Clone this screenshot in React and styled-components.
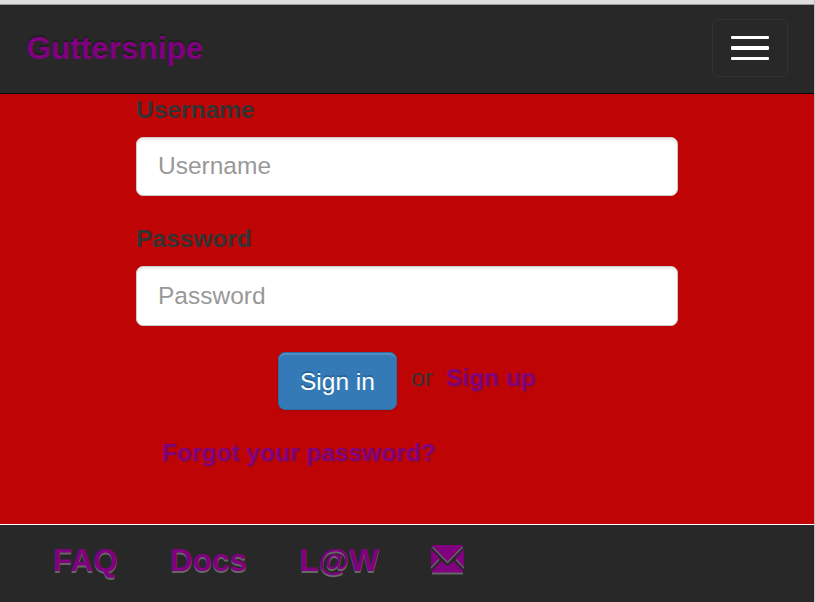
import React from "react";
import styled, { createGlobalStyle } from "styled-components";

const GlobalStyle = createGlobalStyle`
  * { box-sizing: border-box; }
  body {
    margin: 0;
    background: #be0404;
    overflow: hidden;
    font-family: "Liberation Sans", Arial, sans-serif;
    font-size: 24.5px;
    color: #333;
  }
`;

const Page = styled.div`
  display: flex;
  flex-direction: column;
  width: 815px;
  height: 602px;
  border-right: 1px solid #c4bcbc;
  background: #be0404;
`;

const TopEdge = styled.div`
  height: 5px;
  flex: none;
  background: #dedede;
  border-bottom: 1px solid #999;
`;

const Navbar = styled.header`
  display: flex;
  flex: none;
  align-items: flex-start;
  justify-content: space-between;
  height: 89px;
  padding: 14px 26px 0 26.5px;
  background: #282828;
  border-bottom: 1px solid #080808;
`;

const Brand = styled.a`
  margin-top: 11px;
  font-size: 31.5px;
  line-height: 36px;
  font-weight: bold;
  color: purple;
  text-shadow: 0 -2px 0 rgba(0, 0, 0, 0.25);
`;

const Toggle = styled.button`
  display: flex;
  flex-direction: column;
  align-items: center;
  width: 76px;
  height: 58px;
  padding: 16px 0 0;
  background: transparent;
  border: 1px solid #333;
  border-radius: 7px;
`;

const Bar = styled.span`
  flex: none;
  width: 38px;
  height: ${(p) => (p.$thick ? 4 : 3)}px;
  margin-bottom: 7px;
  border-radius: 1px;
  background: #fff;
`;

const Form = styled.form`
  flex: none;
  width: 542px;
  height: 430px;
  margin-left: 136px;
`;

const Field = styled.div`
  height: 129px;
`;

const Label = styled.label`
  display: block;
  height: 43px;
  padding-top: 1px;
  line-height: 29px;
  font-weight: bold;
`;

const Input = styled.input`
  display: block;
  width: 542px;
  height: ${(p) => p.$height}px;
  padding: 0 21px ${(p) => (p.$height === 60 ? 0 : 2)}px;
  font: 24.5px "Liberation Sans", Arial, sans-serif;
  color: #555;
  background: #fff;
  border: 1px solid #ccc;
  border-radius: 7px;
  box-shadow: inset 0 2px 2px rgba(0, 0, 0, 0.075);
  &::placeholder {
    color: #999;
    opacity: 1;
  }
`;

const Actions = styled.div`
  display: flex;
  align-items: flex-start;
  height: 58px;
  padding-left: 142px;
`;

const SignIn = styled.button`
  width: 119px;
  height: 58px;
  padding: 1px 0 0;
  font: 24.5px "Liberation Sans", Arial, sans-serif;
  color: #fff;
  background: #337ab7;
  border: 1px solid #2e6da4;
  border-radius: 7px;
  text-shadow: 0 -2px 0 rgba(0, 0, 0, 0.2);
  box-shadow: inset 0 2px 0 rgba(255, 255, 255, 0.15), 0 2px 2px rgba(0, 0, 0, 0.075);
`;

const Or = styled.span`
  width: 35px;
  margin: 11px 0 0 14px;
  line-height: 29px;
`;

const TextLink = styled.a`
  font-weight: bold;
  line-height: 29px;
  color: purple;
  text-shadow: 1px 1px 1px rgba(51, 51, 51, 0.25);
`;

const SignUp = styled(TextLink)`
  margin-top: 11px;
`;

const Forgot = styled(TextLink)`
  display: block;
  margin: 28px 0 0 26px;
`;

const Footer = styled.footer`
  display: flex;
  align-items: flex-start;
  gap: 52.3px;
  flex: none;
  height: 78px;
  padding: 17px 0 0 53px;
  background: #282828;
  border-top: 1px solid #fff;
`;

const FooterLink = styled.a`
  font-size: 31.5px;
  line-height: 36px;
  font-weight: bold;
  color: purple;
  text-shadow: 0 2px 0 #666;
`;

const Envelope = styled.svg`
  display: block;
  width: 33px;
  height: 28px;
  margin-top: 3px;
  overflow: visible;
  fill: purple;
  filter: drop-shadow(0 2px 0 #666);
`;

export default function App() {
  return (
    <>
      <GlobalStyle />
      <Page>
        <TopEdge />
        <Navbar>
          <Brand>Guttersnipe</Brand>
          <Toggle type="button" aria-label="Toggle navigation">
            <Bar />
            <Bar $thick />
            <Bar />
          </Toggle>
        </Navbar>
        <Form>
          <Field>
            <Label htmlFor="username">Username</Label>
            <Input id="username" placeholder="Username" $height={59} />
          </Field>
          <Field>
            <Label htmlFor="password">Password</Label>
            <Input id="password" type="password" placeholder="Password" $height={60} />
          </Field>
          <Actions>
            <SignIn type="button">Sign in</SignIn>
            <Or>or</Or>
            <SignUp>Sign up</SignUp>
          </Actions>
          <Forgot>Forgot your password?</Forgot>
        </Form>
        <Footer>
          <FooterLink>FAQ</FooterLink>
          <FooterLink>Docs</FooterLink>
          <FooterLink>L@W</FooterLink>
          <FooterLink aria-label="Contact">
            <Envelope viewBox="0 0 33 28">
              <path d="M0.5 0H32.5L16.5 16.5Z" />
              <path d="M0 4L8.5 13L0 22Z" />
              <path d="M33 4L24.5 13L33 22Z" />
              <path d="M1 27.5V25.5L10.5 16L16.5 21L22.5 16L32 25.5V27.5Z" />
            </Envelope>
          </FooterLink>
        </Footer>
      </Page>
    </>
  );
}
